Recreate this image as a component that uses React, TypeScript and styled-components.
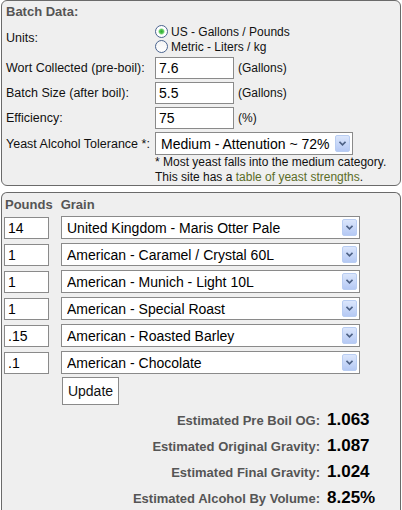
import React, { useState } from 'react';
import styled, { createGlobalStyle } from 'styled-components';

const GlobalStyle = createGlobalStyle`
  body {
    margin: 0;
    background: #ffffff;
    font-family: "Liberation Sans", Arial, sans-serif;
    font-size: 12px;
    color: #111;
  }
`;

const Page = styled.div`
  width: 401px;
  padding-left: 1px;
  box-sizing: border-box;
  display: flex;
  flex-direction: column;
  gap: 6px;
`;

const Panel = styled.div<{ $open?: boolean }>`
  background: #efefef;
  border: 1px solid #6a6a6a;
  border-radius: 6px;
  ${p => p.$open && 'border-bottom: none; border-bottom-left-radius: 0; border-bottom-right-radius: 0;'}
  padding: ${p => (p.$open ? '2px 0 12px 2px' : '1px 0 0 4px')};
`;

const Heading = styled.div`
  font-weight: bold;
  font-size: 13px;
  color: #555;
  height: 20px;
  line-height: 20px;
`;

const FormGrid = styled.div`
  display: grid;
  grid-template-columns: 149px auto;
  row-gap: 3px;
  align-items: center;
`;

const Label = styled.div`
  font-size: 12.5px;
`;

const RadioGroup = styled.div`
  display: flex;
  flex-direction: column;
  padding-top: 2px;
`;

const RadioLine = styled.label`
  display: flex;
  align-items: center;
  height: 15px;
  gap: 3px;
  font-size: 12px;
`;

const RadioDot = styled.span<{ $checked?: boolean }>`
  width: 11px;
  height: 11px;
  border-radius: 50%;
  border: 1px solid #4a6490;
  background: ${p =>
    p.$checked
      ? 'radial-gradient(circle, #2faa2f 0, #56c856 2px, #fff 3.5px)'
      : 'linear-gradient(#f4f4f4, #ffffff)'};
  flex: none;
`;

const FieldLine = styled.div`
  display: flex;
  align-items: center;
  gap: 4px;
`;

const TextBox = styled.input<{ $w: number }>`
  width: ${p => p.$w}px;
  height: 22px;
  box-sizing: border-box;
  border: 1px solid #8a8a8a;
  background: #fff;
  font-family: "Liberation Sans", Arial, sans-serif;
  font-size: 14px;
  padding: 0 3px;
  margin: 0;
  color: #000;
  outline: none;
`;

const Unit = styled.span`
  font-size: 12px;
`;

const SelectBox = styled.div<{ $w: number }>`
  width: ${p => p.$w}px;
  height: 23px;
  box-sizing: border-box;
  border: 1px solid #8a8a8a;
  background: #fff;
  display: flex;
  align-items: center;
  padding: 0 2px 0 0;
`;

const NativeSelect = styled.select`
  appearance: none;
  -webkit-appearance: none;
  border: none;
  background: transparent;
  flex: 1;
  min-width: 0;
  height: 100%;
  font-family: "Liberation Sans", Arial, sans-serif;
  font-size: 14px;
  color: #000;
  padding: 0 5px;
  outline: none;
`;

const ArrowButton = styled.span`
  width: 15px;
  height: 17px;
  flex: none;
  box-sizing: border-box;
  border: 1px solid #b9cdf2;
  border-radius: 2px;
  background: linear-gradient(#dbe6fc, #b5c9f4);
  display: flex;
  align-items: center;
  justify-content: center;
`;

const Note = styled.div`
  font-size: 12px;
  line-height: 15px;
  margin-top: -3px;
`;

const NoteLink = styled.a`
  color: #5b6d28;
  text-decoration: none;
`;

const GrainHead = styled.div`
  display: flex;
  gap: 8px;
  padding-left: 1px;
  margin-bottom: 1px;
`;

const GrainRows = styled.div`
  display: flex;
  flex-direction: column;
  gap: 4px;
`;

const GrainRow = styled.div`
  display: flex;
  gap: 12px;
  align-items: center;
`;

const UpdateButton = styled.button`
  display: block;
  margin: 3px 0 0 58px;
  width: 57px;
  height: 28px;
  border: 1px solid #8a8a8a;
  background: #fff;
  font-family: "Liberation Sans", Arial, sans-serif;
  font-size: 14px;
  color: #111;
  padding: 0;
`;

const Results = styled.div`
  display: grid;
  grid-template-columns: 316px auto;
  column-gap: 7px;
  row-gap: 5px;
  margin-top: 5px;
  align-items: baseline;
`;

const ResultLabel = styled.span`
  font-weight: bold;
  font-size: 13px;
  color: #555;
  text-align: right;
  line-height: 20px;
`;

const ResultValue = styled.span`
  font-weight: bold;
  font-size: 17px;
  color: #000;
  line-height: 20px;
`;

const Chevron = () => (
  <ArrowButton>
    <svg width="7" height="5" viewBox="0 0 7 5">
      <path d="M0.5 0.8 L3.5 3.8 L6.5 0.8" fill="none" stroke="#4d6185" strokeWidth="1.6" />
    </svg>
  </ArrowButton>
);

const Select = ({ w, value }: { w: number; value: string }) => (
  <SelectBox $w={w}>
    <NativeSelect defaultValue={value}>
      <option>{value}</option>
    </NativeSelect>
    <Chevron />
  </SelectBox>
);

const grains = [
  { lbs: '14', name: 'United Kingdom - Maris Otter Pale' },
  { lbs: '1', name: 'American - Caramel / Crystal 60L' },
  { lbs: '1', name: 'American - Munich - Light 10L' },
  { lbs: '1', name: 'American - Special Roast' },
  { lbs: '.15', name: 'American - Roasted Barley' },
  { lbs: '.1', name: 'American - Chocolate' },
];

const results = [
  { label: 'Estimated Pre Boil OG:', value: '1.063' },
  { label: 'Estimated Original Gravity:', value: '1.087' },
  { label: 'Estimated Final Gravity:', value: '1.024' },
  { label: 'Estimated Alcohol By Volume:', value: '8.25%' },
];

export default function App() {
  const [metric, setMetric] = useState(false);
  return (
    <Page>
      <GlobalStyle />
      <Panel>
        <Heading>Batch Data:</Heading>
        <FormGrid>
          <Label>Units:</Label>
          <RadioGroup>
            <RadioLine onClick={() => setMetric(false)}>
              <RadioDot $checked={!metric} />
              US - Gallons / Pounds
            </RadioLine>
            <RadioLine onClick={() => setMetric(true)}>
              <RadioDot $checked={metric} />
              Metric - Liters / kg
            </RadioLine>
          </RadioGroup>
          <Label>Wort Collected (pre-boil):</Label>
          <FieldLine>
            <TextBox $w={79} defaultValue="7.6" />
            <Unit>(Gallons)</Unit>
          </FieldLine>
          <Label>Batch Size (after boil):</Label>
          <FieldLine>
            <TextBox $w={79} defaultValue="5.5" />
            <Unit>(Gallons)</Unit>
          </FieldLine>
          <Label>Efficiency:</Label>
          <FieldLine>
            <TextBox $w={79} defaultValue="75" />
            <Unit>(%)</Unit>
          </FieldLine>
          <Label>Yeast Alcohol Tolerance *:</Label>
          <Select w={198} value="Medium - Attenution ~ 72%" />
          <div />
          <Note>
            * Most yeast falls into the medium category.
            <br />
            This site has a <NoteLink href="#">table of yeast strengths</NoteLink>.
          </Note>
        </FormGrid>
      </Panel>
      <Panel $open>
        <GrainHead>
          <Heading>Pounds</Heading>
          <Heading>Grain</Heading>
        </GrainHead>
        <GrainRows>
          {grains.map((g, i) => (
            <GrainRow key={i}>
              <TextBox $w={45} defaultValue={g.lbs} />
              <Select w={299} value={g.name} />
            </GrainRow>
          ))}
        </GrainRows>
        <UpdateButton>Update</UpdateButton>
        <Results>
          {results.map(r => (
            <React.Fragment key={r.label}>
              <ResultLabel>{r.label}</ResultLabel>
              <ResultValue>{r.value}</ResultValue>
            </React.Fragment>
          ))}
        </Results>
      </Panel>
    </Page>
  );
}
